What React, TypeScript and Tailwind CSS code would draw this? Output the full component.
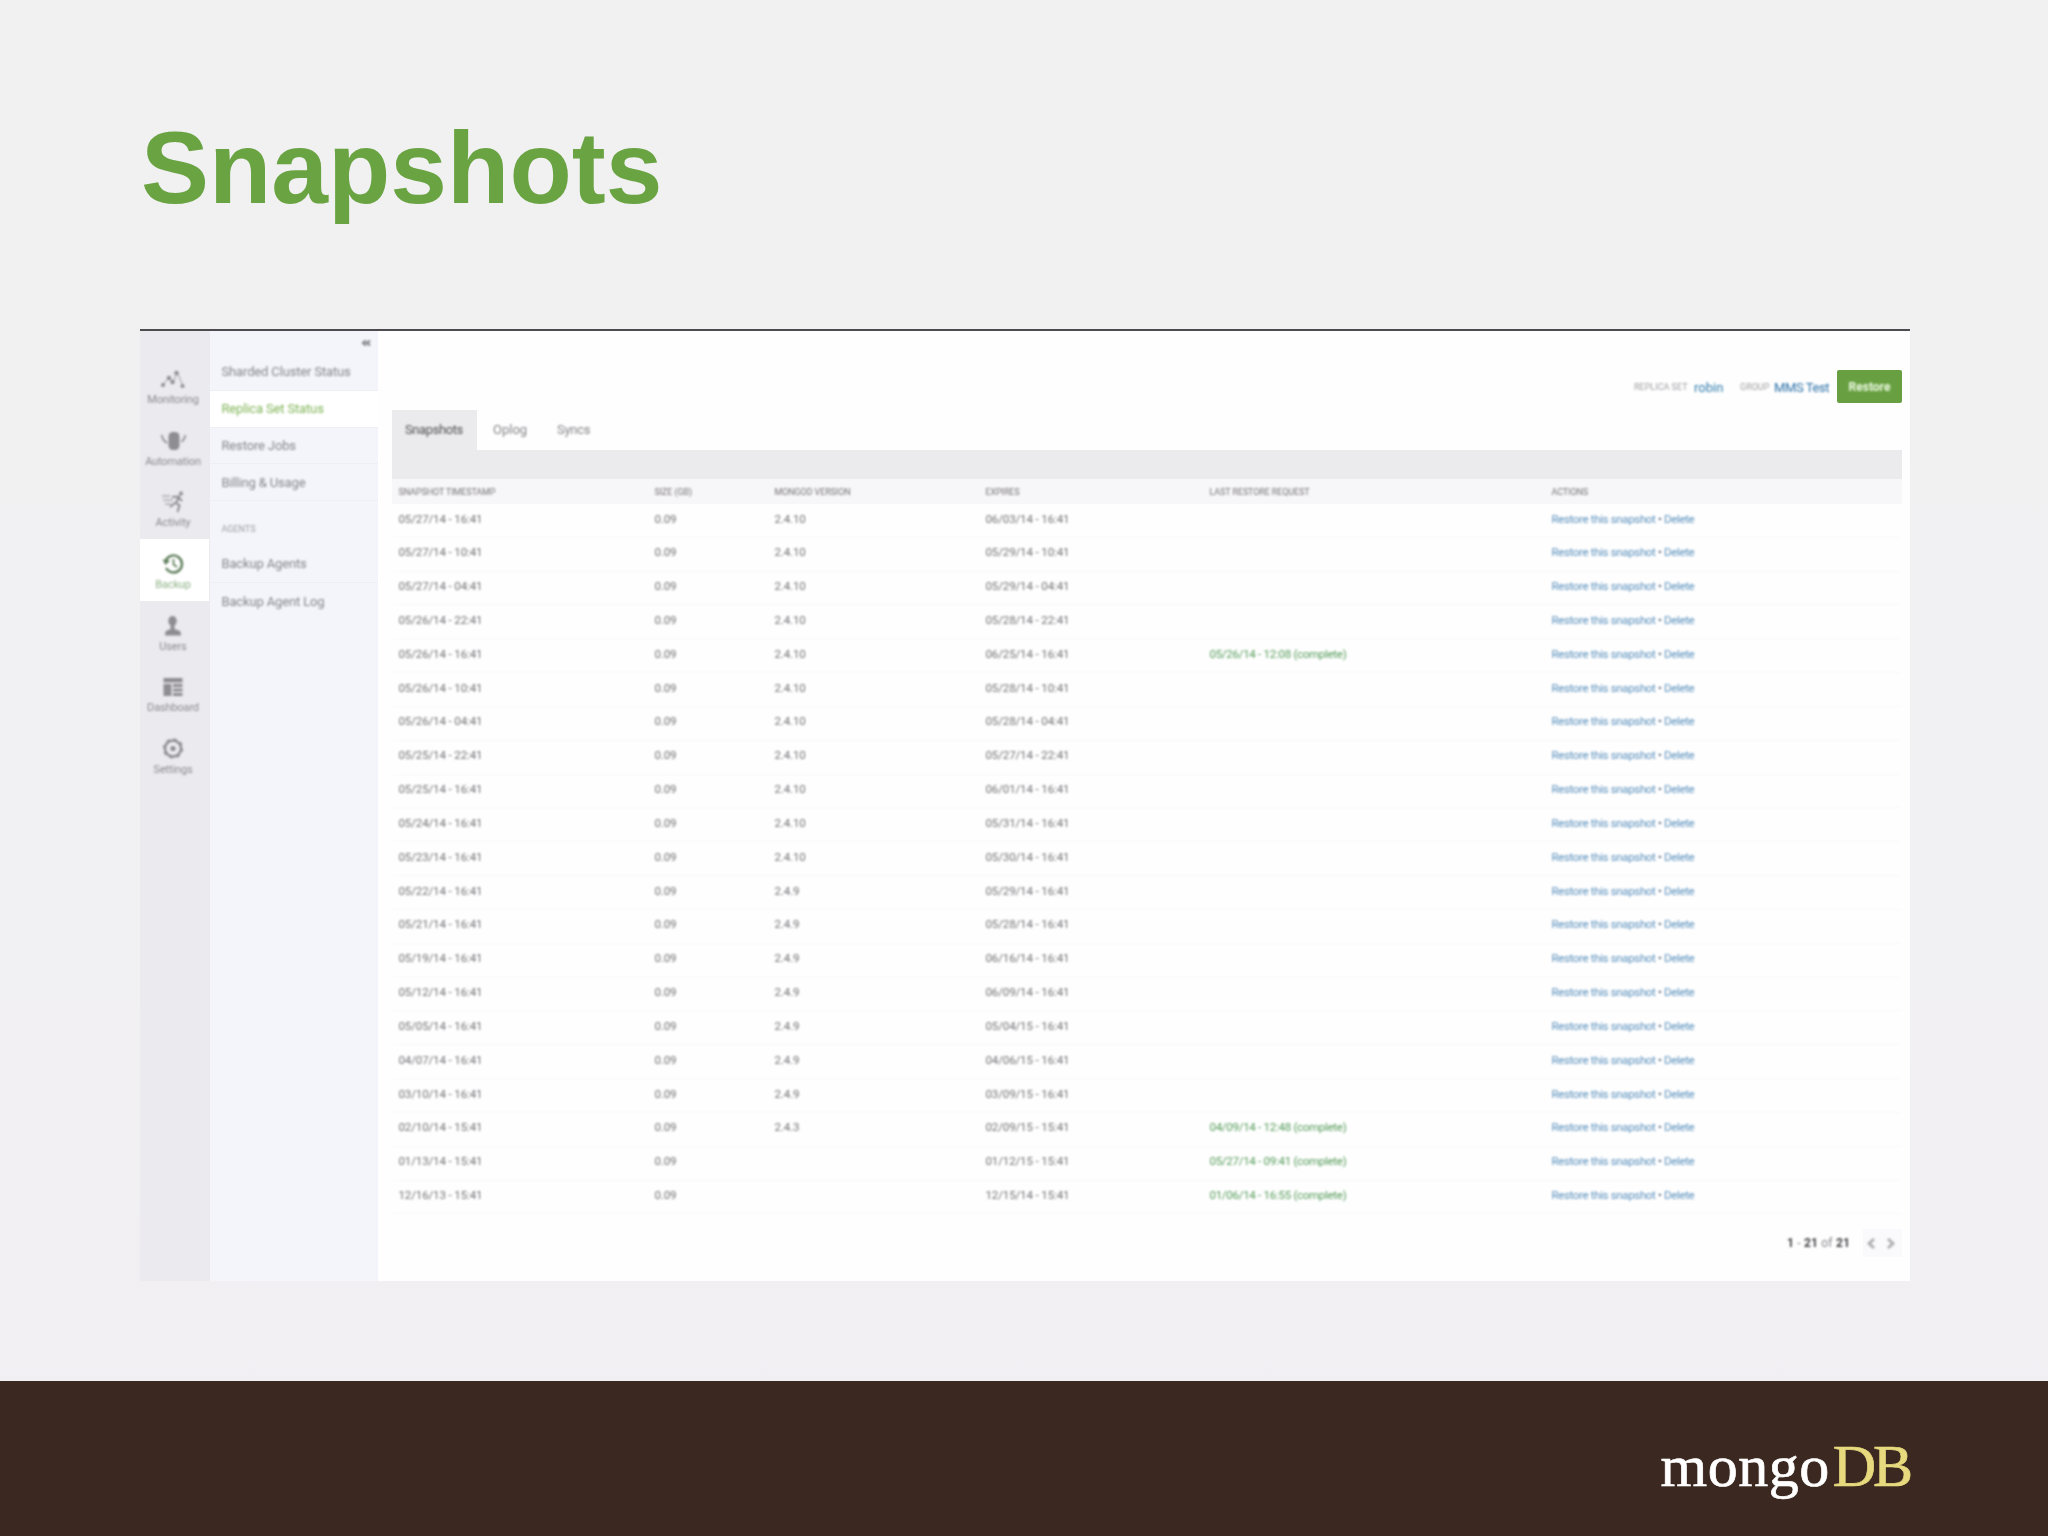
import type { ReactNode } from "react"

interface Snapshot {
  taken: string
  version: string
  expires: string
  restore?: string
}

const snapshots: Snapshot[] = [
  { taken: "05/27/14 - 16:41", version: "2.4.10", expires: "06/03/14 - 16:41" },
  { taken: "05/27/14 - 10:41", version: "2.4.10", expires: "05/29/14 - 10:41" },
  { taken: "05/27/14 - 04:41", version: "2.4.10", expires: "05/29/14 - 04:41" },
  { taken: "05/26/14 - 22:41", version: "2.4.10", expires: "05/28/14 - 22:41" },
  { taken: "05/26/14 - 16:41", version: "2.4.10", expires: "06/25/14 - 16:41", restore: "05/26/14 - 12:08 (complete)" },
  { taken: "05/26/14 - 10:41", version: "2.4.10", expires: "05/28/14 - 10:41" },
  { taken: "05/26/14 - 04:41", version: "2.4.10", expires: "05/28/14 - 04:41" },
  { taken: "05/25/14 - 22:41", version: "2.4.10", expires: "05/27/14 - 22:41" },
  { taken: "05/25/14 - 16:41", version: "2.4.10", expires: "06/01/14 - 16:41" },
  { taken: "05/24/14 - 16:41", version: "2.4.10", expires: "05/31/14 - 16:41" },
  { taken: "05/23/14 - 16:41", version: "2.4.10", expires: "05/30/14 - 16:41" },
  { taken: "05/22/14 - 16:41", version: "2.4.9", expires: "05/29/14 - 16:41" },
  { taken: "05/21/14 - 16:41", version: "2.4.9", expires: "05/28/14 - 16:41" },
  { taken: "05/19/14 - 16:41", version: "2.4.9", expires: "06/16/14 - 16:41" },
  { taken: "05/12/14 - 16:41", version: "2.4.9", expires: "06/09/14 - 16:41" },
  { taken: "05/05/14 - 16:41", version: "2.4.9", expires: "05/04/15 - 16:41" },
  { taken: "04/07/14 - 16:41", version: "2.4.9", expires: "04/06/15 - 16:41" },
  { taken: "03/10/14 - 16:41", version: "2.4.9", expires: "03/09/15 - 16:41" },
  { taken: "02/10/14 - 15:41", version: "2.4.3", expires: "02/09/15 - 15:41", restore: "04/09/14 - 12:48 (complete)" },
  { taken: "01/13/14 - 15:41", version: "", expires: "01/12/15 - 15:41", restore: "05/27/14 - 09:41 (complete)" },
  { taken: "12/16/13 - 15:41", version: "", expires: "12/15/14 - 15:41", restore: "01/06/14 - 16:55 (complete)" },
]

const columns = "grid grid-cols-[256px_120px_211px_224px_342px_1fr] pl-[6.5px]"

function Icon({ children }: { children: ReactNode }) {
  return (
    <svg width="28" height="22" viewBox="0 0 28 22" fill="none" stroke="currentColor" strokeWidth="2">
      {children}
    </svg>
  )
}

const navItems = [
  {
    label: "Monitoring",
    icon: (
      <Icon>
        <path d="M4 17L10 9L14 15L18 4L24 18" strokeWidth="0.8" />
        <g fill="currentColor" stroke="none">
          <circle cx="4" cy="17" r="2" />
          <circle cx="10" cy="10" r="2.2" />
          <circle cx="13.5" cy="14" r="2.2" />
          <circle cx="17.5" cy="5" r="2.2" />
          <circle cx="23.5" cy="18" r="2" />
        </g>
      </Icon>
    ),
  },
  {
    label: "Automation",
    icon: (
      <Icon>
        <rect x="9.5" y="2" width="11" height="18" rx="4.5" fill="currentColor" stroke="none" />
        <path d="M2.5 5L4.5 10L8 13M26.5 5L25 9L22.5 12" strokeWidth="1.7" />
      </Icon>
    ),
  },
  {
    label: "Activity",
    icon: (
      <Icon>
        <circle cx="22" cy="2.5" r="2" fill="currentColor" stroke="none" />
        <path d="M13 6L20 5.5L17 12L20.5 14.5L18.5 21M20 7L23 10M16 12L11 16" />
        <path d="M3 5H11M4 9H14M6 13H12" strokeWidth="1" />
      </Icon>
    ),
  },
  {
    label: "Backup",
    icon: (
      <Icon>
        <path d="M6.5 8A8.5 8.5 0 1 1 7 15" strokeWidth="2.4" />
        <path d="M3.5 6.5L11 7.5L6.5 12Z" fill="currentColor" stroke="none" />
        <path d="M14.5 6V11.5L18 14" strokeWidth="1.7" />
      </Icon>
    ),
  },
  {
    label: "Users",
    icon: (
      <Icon>
        <g fill="currentColor" stroke="none">
          <ellipse cx="13.5" cy="6" rx="4.2" ry="5" />
          <path d="M11.5 10H15.5V14L21 16Q22 17 22 20.5H6Q6 17 7 16L11.5 14Z" />
        </g>
      </Icon>
    ),
  },
  {
    label: "Dashboard",
    icon: (
      <Icon>
        <g fill="currentColor" stroke="none">
          <rect x="4.5" y="2" width="19" height="4.5" />
          <rect x="4.5" y="8" width="8" height="12" />
          <rect x="14" y="8" width="9.5" height="3" />
          <rect x="14" y="12.5" width="9.5" height="3" />
          <rect x="14" y="17" width="9.5" height="3" />
        </g>
      </Icon>
    ),
  },
  {
    label: "Settings",
    icon: (
      <Icon>
        <circle cx="14" cy="10.5" r="8" strokeWidth="2.4" />
        <circle cx="14" cy="10.5" r="9.5" strokeWidth="1.2" strokeDasharray="3.7 3.76" />
        <circle cx="14" cy="10.5" r="2.6" fill="currentColor" stroke="none" />
      </Icon>
    ),
  },
]

function NavBar() {
  return (
    <nav className="w-[70px] shrink-0 bg-[#ebeaee] pt-[23px]">
      {navItems.map(({ label, icon }) => (
        <div
          key={label}
          className={`flex h-[61.7px] w-[69px] flex-col items-center pt-[14px] ${
            label === "Backup" ? "bg-white text-[#5f7f5c]" : "text-[#8e8d92]"
          }`}
        >
          <div className="ml-[-3px] h-[22px] blur-[0.8px]">{icon}</div>
          <span
            className={`ml-[-3px] text-[11px] leading-[19px] tracking-[-0.15px] blur-[0.8px] ${
              label === "Backup" ? "text-[#8eb387]" : "text-[#8c8b90]"
            }`}
          >
            {label}
          </span>
        </div>
      ))}
    </nav>
  )
}

function SideLink({ label, active }: { label: string; active?: boolean }) {
  return (
    <div
      className={`flex h-[36.8px] items-center border-b border-[#eeeff3] pl-[11.5px] text-[13px] tracking-[-0.15px] ${
        active ? "bg-white text-[#7fb455]" : "text-[#85868b]"
      }`}
    >
      <span className="blur-[0.8px]">{label}</span>
    </div>
  )
}

function SideBar() {
  return (
    <aside className="w-[168px] shrink-0 bg-[#f4f5fa]">
      <div className="flex h-[23px] items-center justify-end pr-[7px]">
        <svg width="9" height="6" viewBox="0 0 9 6" fill="none" stroke="#77787d" strokeWidth="1.9" className="blur-[0.8px]">
          <path d="M4 0.5L1 3L4 5.5M8 0.5L5 3L8 5.5" />
        </svg>
      </div>
      <SideLink label="Sharded Cluster Status" />
      <SideLink label="Replica Set Status" active />
      <SideLink label="Restore Jobs" />
      <SideLink label="Billing & Usage" />
      <div className="flex h-[45px] items-center pt-[12px] pl-[11.5px] text-[9px] text-[#9a9ba0]">
        <span className="blur-[0.8px]">AGENTS</span>
      </div>
      <SideLink label="Backup Agents" />
      <div className="flex h-[36.8px] items-center pl-[11.5px] text-[13px] tracking-[-0.15px] text-[#85868b]">
        <span className="blur-[0.8px]">Backup Agent Log</span>
      </div>
    </aside>
  )
}

function Header() {
  return (
    <div className="flex h-[79px] items-start justify-end pt-[39px]">
      <div className="flex h-[35px] items-center blur-[0.8px]">
        <span className="w-[60px] text-[9px] text-[#9d9ca0]">REPLICA SET</span>
        <span className="w-[46px] text-[13px] text-[#2f7bad]">robin</span>
        <span className="w-[34px] text-[9px] text-[#9d9ca0]">GROUP</span>
        <span className="w-[63px] text-[13px] tracking-[-0.4px] text-[#2c72a8]">MMS Test</span>
      </div>
      <button className="h-[33px] w-[65px] rounded-[2px] bg-[#68a041] text-[12px] font-bold text-[#eefae4]">
        <span className="inline-block blur-[0.8px]">Restore</span>
      </button>
    </div>
  )
}

function SnapshotRow({ snapshot }: { snapshot: Snapshot }) {
  return (
    <div
      className={`${columns} h-[33.84px] border-b border-[#fafafb] pt-[5.5px] text-[11.5px] leading-[18px] tracking-[-0.12px] text-[#737276]`}
    >
      <span>{snapshot.taken}</span>
      <span>0.09</span>
      <span>{snapshot.version}</span>
      <span>{snapshot.expires}</span>
      <span className="tracking-[-0.28px] text-[#569c5a]">{snapshot.restore}</span>
      <span className="tracking-[-0.35px] text-[#5a90bd]">
        Restore this snapshot <span className="text-[#56657a]">•</span> Delete
      </span>
    </div>
  )
}

function Pager() {
  return (
    <div className="mt-[15px] flex h-[28px] items-center justify-end">
      <div className="w-[76px] text-[12px] tracking-[0.2px] text-[#88878c] blur-[0.8px]">
        <b className="text-[#3f3e42]">1</b> - <b className="text-[#3f3e42]">21</b> of <b className="text-[#3f3e42]">21</b>
      </div>
      <div className="flex h-full w-[39px] items-center gap-3 bg-[#faf9fb] pl-[4px]">
        <svg width="8" height="11" viewBox="0 0 8 11" fill="none" stroke="#adacb0" strokeWidth="2.8" className="blur-[0.8px]">
          <path d="M7 1L2 5.5L7 10" />
        </svg>
        <svg width="8" height="11" viewBox="0 0 8 11" fill="none" stroke="#adacb0" strokeWidth="2.8" className="blur-[0.8px]">
          <path d="M1 1L6 5.5L1 10" />
        </svg>
      </div>
    </div>
  )
}

export default function App() {
  return (
    <div className="flex h-[1536px] w-[2048px] flex-col bg-linear-to-b from-[#f1f1f1] to-[#f1eff3] font-['Roboto',sans-serif]">
      <h1 className="h-[329px] pt-[108.5px] pl-[141px] font-['Liberation_Sans',sans-serif] text-[102px] leading-[118px] font-bold text-[#69a342]">
        Snapshots
      </h1>

      <div className="ml-[140px] flex h-[952px] w-[1770px] flex-col border-t-[2.5px] border-[#4d4b50] bg-white">
        <div className="flex flex-1">
          <NavBar />
          <SideBar />
          <main className="flex-1 bg-[#fefefe] pr-[8px] pl-[14px]">
            <Header />
            <div className="flex h-[40px] text-[13px] leading-[40px] text-[#858488]">
              <div className="w-[85px] bg-[#ebeaec] pl-[13px] tracking-[-0.4px] text-[#515054]">
                <span className="inline-block blur-[0.8px]">Snapshots</span>
              </div>
              <span className="w-[64px] pl-[16px] blur-[0.8px]">Oplog</span>
              <span className="pl-[16px] tracking-[-0.3px] blur-[0.8px]">Syncs</span>
            </div>
            <div className="h-[29px] bg-[#ebeaec]" />
            <div className="bg-[#f7f6f8]">
              <div className={`${columns} h-[25px] text-[9px] leading-[26px] tracking-[-0.12px] text-[#747377] blur-[0.8px]`}>
                <span>SNAPSHOT TIMESTAMP</span>
                <span>SIZE (GB)</span>
                <span>MONGOD VERSION</span>
                <span>EXPIRES</span>
                <span>LAST RESTORE REQUEST</span>
                <span>ACTIONS</span>
              </div>
            </div>
            <div className="blur-[0.8px]">
              {snapshots.map((snapshot) => (
                <SnapshotRow key={snapshot.taken} snapshot={snapshot} />
              ))}
            </div>
            <Pager />
          </main>
        </div>
      </div>

      <footer className="mt-auto flex h-[155px] justify-end bg-[#3b2820] pt-[50px] pr-[138px] font-['Liberation_Serif',serif] text-[60px] leading-[70px] text-white">
        <span className="tracking-[0.5px] [-webkit-text-stroke:0.7px_white]">mongo</span>
        <span className="ml-[3px] tracking-[-3px] text-[#e7da7e] [-webkit-text-stroke:0.7px_#e7da7e]">DB</span>
      </footer>
    </div>
  )
}
